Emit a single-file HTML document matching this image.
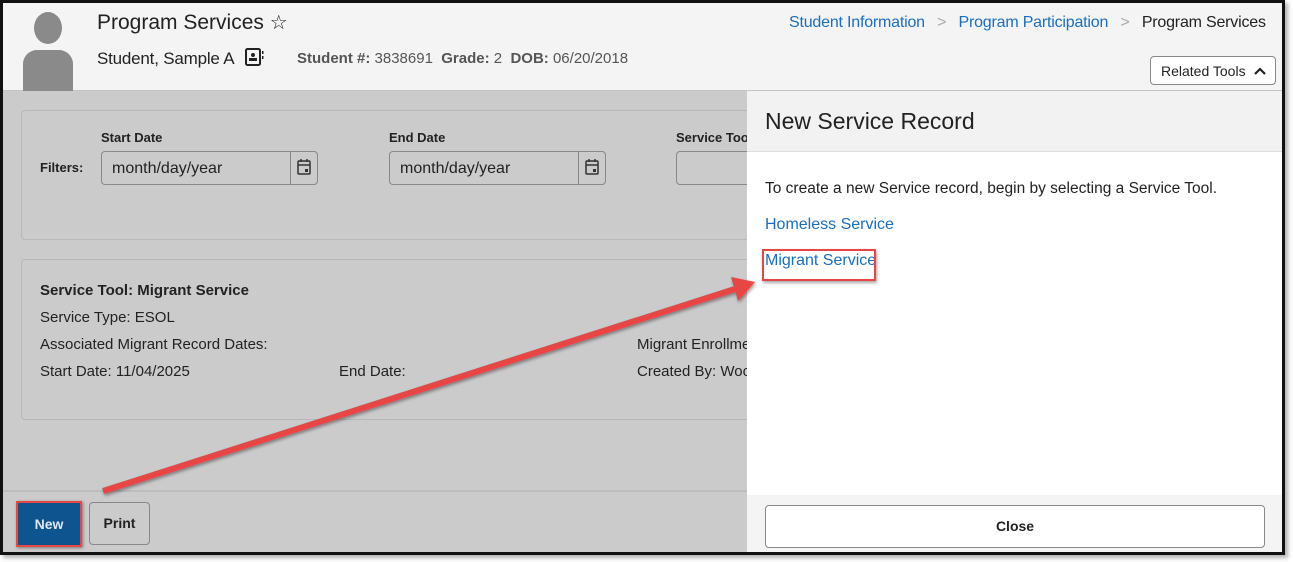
<!DOCTYPE html>
<html><head><style>
*{margin:0;padding:0;box-sizing:border-box}
body{width:1293px;height:562px;background:#fff;font-family:"Liberation Sans",sans-serif;position:relative;overflow:hidden}
.frame{position:absolute;left:0;top:0;width:1285px;height:555px;border:3px solid #111;background:#cbcbcb;overflow:hidden;box-shadow:3px 3px 4px rgba(0,0,0,.3)}
.abs{position:absolute}
.hdr{left:0;top:0;width:1282px;height:88px;background:#f4f4f4;border-bottom:1px solid #c4c4c4}
.t{font-size:21px;color:#222}
.lnk{color:#1a6ebd}
.box{border:1px solid #b8b8b8;border-radius:4px;background:#cbcbcb}
.inp{border:1px solid #888;border-radius:4px;background:#cbcbcb;height:34px;font-size:16px;color:#222;padding:8px 10px}
.lbl{font-size:13px;font-weight:bold;color:#222}
.txt{font-size:15px;color:#222}
</style></head><body>
<div class="frame">
 <div class="abs hdr">
  <div class="abs" style="left:20px;top:9px;width:50px;height:79px;overflow:hidden">
   <div class="abs" style="left:11px;top:0;width:28px;height:32px;border-radius:50%;background:#8a8a8a"></div>
   <div class="abs" style="left:0;top:38px;width:50px;height:50px;border-radius:14px 14px 0 0;background:#8a8a8a"></div>
  </div>
  <div class="abs t" style="left:94px;top:7px">Program Services <span style="font-size:20px">☆</span></div>
  <div class="abs" style="left:94px;top:44px;font-size:17px;color:#222;letter-spacing:-0.2px">Student, Sample A
   <svg width="20" height="20" viewBox="0 0 20 20" style="vertical-align:-3px;margin-left:6px"><rect x="2" y="2" width="14" height="16" rx="1.5" fill="none" stroke="#222" stroke-width="2"/><circle cx="9" cy="8" r="2" fill="#222"/><rect x="5" y="11" width="8" height="3" fill="#222"/><rect x="18" y="4" width="1.5" height="3" fill="#222"/><rect x="18" y="9" width="1.5" height="3" fill="#222"/></svg></div>
  <div class="abs" style="left:294px;top:47px;font-size:15px;color:#555"><b>Student #:</b> 3838691 &nbsp;<b>Grade:</b> 2 &nbsp;<b>DOB:</b> 06/20/2018</div>
  <div class="abs" style="left:786px;top:11px;font-size:16px;letter-spacing:-0.2px"><span class="lnk">Student Information</span> <span style="color:#aaa;margin:0 8px">&gt;</span> <span class="lnk">Program Participation</span> <span style="color:#aaa;margin:0 8px">&gt;</span> <span style="color:#222">Program Services</span></div>
  <div class="abs" style="left:1147px;top:53px;width:126px;height:29px;border:1px solid #888;border-radius:4px;background:#fff;font-size:14px;color:#222;padding:6px 0 0 10px">Related Tools <svg width="14" height="10" viewBox="0 0 14 10" style="margin-left:4px"><path d="M2 8L7 3L12 8" fill="none" stroke="#222" stroke-width="2.2"/></svg></div>
 </div>
 <div class="abs box" style="left:18px;top:107px;width:740px;height:130px"></div>
 <div class="abs lbl" style="left:37px;top:157px">Filters:</div>
 <div class="abs lbl" style="left:98px;top:127px">Start Date</div>
 <div class="abs inp" style="left:98px;top:148px;width:217px">month/day/year</div>
 <div class="abs" style="left:287px;top:149px;width:1px;height:32px;background:#888"></div>
 <div class="abs lbl" style="left:386px;top:127px">End Date</div>
 <div class="abs inp" style="left:386px;top:148px;width:217px">month/day/year</div>
 <div class="abs" style="left:575px;top:149px;width:1px;height:32px;background:#888"></div>
 <svg class="abs" style="left:294px;top:155px" width="14" height="18" viewBox="0 0 14 18"><rect x="1" y="3" width="12" height="13" rx="1" fill="none" stroke="#333" stroke-width="1.5"/><line x1="1" y1="7" x2="13" y2="7" stroke="#333" stroke-width="1.5"/><line x1="4" y1="1" x2="4" y2="4" stroke="#333" stroke-width="1.5"/><line x1="10" y1="1" x2="10" y2="4" stroke="#333" stroke-width="1.5"/><rect x="8" y="11" width="3" height="3" fill="#333"/></svg>
 <svg class="abs" style="left:582px;top:155px" width="14" height="18" viewBox="0 0 14 18"><rect x="1" y="3" width="12" height="13" rx="1" fill="none" stroke="#333" stroke-width="1.5"/><line x1="1" y1="7" x2="13" y2="7" stroke="#333" stroke-width="1.5"/><line x1="4" y1="1" x2="4" y2="4" stroke="#333" stroke-width="1.5"/><line x1="10" y1="1" x2="10" y2="4" stroke="#333" stroke-width="1.5"/><rect x="8" y="11" width="3" height="3" fill="#333"/></svg>
 <div class="abs lbl" style="left:673px;top:127px">Service Tool</div>
 <div class="abs inp" style="left:673px;top:148px;width:120px"></div>
 <div class="abs box" style="left:18px;top:256px;width:740px;height:161px"></div>
 <div class="abs txt" style="left:37px;top:279px;font-weight:bold">Service Tool: Migrant Service</div>
 <div class="abs txt" style="left:37px;top:306px">Service Type: ESOL</div>
 <div class="abs txt" style="left:37px;top:333px">Associated Migrant Record Dates:</div>
 <div class="abs txt" style="left:634px;top:333px">Migrant Enrollment</div>
 <div class="abs txt" style="left:37px;top:360px">Start Date: 11/04/2025</div>
 <div class="abs txt" style="left:336px;top:360px">End Date:</div>
 <div class="abs txt" style="left:634px;top:360px">Created By: Woodward</div>
 <div class="abs" style="left:0;top:487px;width:750px;height:65px;background:#cbcbcb;border-top:2px solid #bdbdbd"></div>
 <div class="abs" style="left:13px;top:498px;width:66px;height:46px;border:2px solid #e84545;box-shadow:1px 1px 3px rgba(0,0,0,.4)"></div>
 <div class="abs" style="left:15px;top:500px;width:62px;height:42px;background:#0e5590;color:#dfe8f2;font-size:14px;font-weight:bold;text-align:center;line-height:42px">New</div>
 <div class="abs" style="left:86px;top:499px;width:61px;height:43px;border:1px solid #888;border-radius:4px;font-size:14px;font-weight:bold;color:#222;text-align:center;line-height:41px">Print</div>

 <div class="abs" style="left:744px;top:88px;width:538px;height:464px;background:#fff">
  <div class="abs" style="left:0;top:0;width:538px;height:61px;background:#f2f2f2;border-bottom:1px solid #ddd"></div>
  <div class="abs" style="left:18px;top:17px;font-size:23px;color:#222">New Service Record</div>
  <div class="abs" style="left:18px;top:89px;font-size:15.5px;color:#222">To create a new Service record, begin by selecting a Service Tool.</div>
  <div class="abs lnk" style="left:18px;top:125px;font-size:16px">Homeless Service</div>
  <div class="abs lnk" style="left:18px;top:161px;font-size:16px">Migrant Service</div>
  <div class="abs" style="left:15px;top:158px;width:114px;height:32px;border:2px solid #e84545;box-shadow:1px 2px 3px rgba(0,0,0,.35)"></div>
  <div class="abs" style="left:0;top:404px;width:538px;height:60px;background:#f4f4f4"></div>
  <div class="abs" style="left:18px;top:414px;width:500px;height:43px;border:1px solid #888;border-radius:4px;background:#fff;font-size:14px;font-weight:bold;color:#222;text-align:center;line-height:41px">Close</div>
 </div>
 <svg class="abs" style="left:0;top:0" width="1282" height="552"><defs><filter id="s"><feDropShadow dx="1" dy="2" stdDeviation="1.5" flood-opacity=".4"/></filter></defs>
  <g filter="url(#s)"><line x1="100" y1="488" x2="735" y2="285" stroke="#e84545" stroke-width="6"/><polygon points="752,279 728,274 735,298" fill="#e84545"/></g></svg>
</div>
</body></html>
